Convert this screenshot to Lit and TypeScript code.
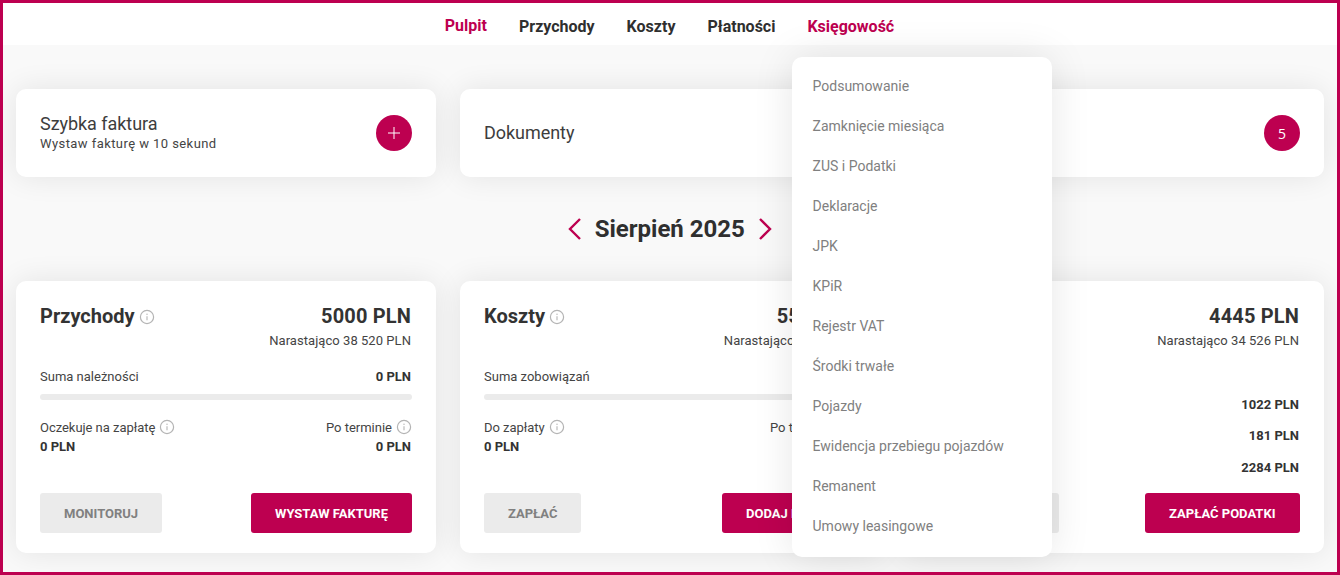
import { LitElement, html, css, svg } from "lit";
import { customElement } from "lit/decorators.js";

const info = html`<svg class="info" width="16" height="16" viewBox="0 0 16 16" fill="none"><circle cx="8" cy="8" r="6.6" stroke="#b4b4b4" stroke-width="1.2"/><path d="M8 7.2v4" stroke="#b4b4b4" stroke-width="1.1"/><circle cx="8" cy="5.2" r=".7" fill="#b4b4b4"/></svg>`;
const chevron = (d: string) => html`<svg width="16" height="24" viewBox="0 0 16 24" fill="none">${svg`<path d=${d} stroke="#bd0050" stroke-width="2.4"/>`}</svg>`;

const menu = ["Podsumowanie","Zamknięcie miesiąca","ZUS i Podatki","Deklaracje","JPK","KPiR","Rejestr VAT","Środki trwałe","Pojazdy","Ewidencja przebiegu pojazdów","Remanent","Umowy leasingowe"];

@customElement("app-root")
export class AppRoot extends LitElement {
  static styles = css`
    :host { display: block; box-sizing: border-box; height: 575px; border: 3px solid #bd0050; background: #f9f9f9; overflow: hidden; font-family: Roboto, sans-serif; color: #333; position: relative; }
    header { height: 42px; box-sizing: border-box; padding: 6px 1px 0 0; background: #fff; display: flex; justify-content: center; align-items: center; gap: 32px; font-size: 16px; font-weight: 700; color: #2f2f2f; position: relative; }
    .nav-item { position: relative; line-height: 20px; }
    .pink { color: #bd0050; }
    .up { margin-top: -2px; }
    .dropdown { position: absolute; left: -15.4px; top: 40px; width: 260px; box-sizing: border-box; padding: 9px 0 11px; background: #fff; border-radius: 10px; box-shadow: 0 0 40px rgba(0,0,0,.1); z-index: 5; }
    .dropdown div { height: 40px; line-height: 40px; padding-left: 20.5px; font-size: 14px; font-weight: 400; color: #808080; white-space: nowrap; }
    main { padding: 44px 13px 0; }
    .grid { display: grid; grid-template-columns: repeat(3, 1fr); gap: 24px; }
    .card { background: #fff; border-radius: 10px; box-shadow: 0 0 30px rgba(0,0,0,.09); }
    .top { height: 88px; box-sizing: border-box; padding: 0 24px; display: flex; align-items: center; justify-content: space-between; }
    .span2 { grid-column: span 2; }
    .qt { font-size: 18px; line-height: 22px; color: #3d3d3d; letter-spacing: -.05px; }
    .quick .qt { margin-top: -2px; }
    .qs { font-size: 13px; line-height: 16px; letter-spacing: .43px; color: #444; margin-top: 1px; }
    .circle { width: 36px; height: 36px; border-radius: 50%; background: #bd0050; color: #fff; display: flex; align-items: center; justify-content: center; font-family: "Open Sans", sans-serif; font-size: 14px; }
    .month { height: 104px; display: flex; align-items: center; justify-content: center; gap: 12px; font-size: 24px; font-weight: 700; color: #2f2f2f; }
    .month span { line-height: 28px; margin-left: -.5px; }
    .stat { height: 272px; box-sizing: border-box; padding: 22px 24px 20px; display: flex; flex-direction: column; }
    .head { display: flex; justify-content: space-between; align-items: center; height: 26px; }
    .title { display: flex; align-items: center; gap: 4px; font-size: 20px; font-weight: 700; color: #333; }
    .title .info { margin-top: 2px; }
    .amount { font-size: 20px; font-weight: 700; color: #333; letter-spacing: .15px; margin-right: 1px; }
    .sub { text-align: right; font-size: 13px; line-height: 16px; margin: 4px 1px 0 0; color: #444; letter-spacing: .05px; }
    .row { display: flex; justify-content: space-between; font-size: 13px; line-height: 16px; color: #444; }
    .sum { margin-top: 20px; }
    b { font-weight: 700; color: #333; }
    .row b { margin-right: 1px; }
    .bar { height: 6px; border-radius: 3px; background: #ebebeb; margin-top: 9px; }
    .split { display: flex; justify-content: space-between; margin-top: 18px; font-size: 13px; color: #444; }
    .split .r { text-align: right; }
    .split .r b { margin-right: 1px; }
    .label { display: flex; align-items: center; gap: 4px; height: 18px; }
    .left .label { letter-spacing: -.04px; }
    .split b { display: block; line-height: 16px; margin-top: 3px; }
    .tax { margin-top: 48px; display: flex; flex-direction: column; gap: 15.3px; }
    .tax .row { justify-content: flex-end; }
    .actions { margin-top: auto; display: flex; justify-content: space-between; }
    .btn { height: 40px; box-sizing: border-box; border-radius: 3px; font-size: 13px; font-weight: 700; text-transform: uppercase; display: flex; align-items: center; justify-content: center; padding: 0 24px; }
    .ghost { background: #ebebeb; color: #808080; }
    .primary { background: #bd0050; color: #fff; }
    .pay { padding: 0 24.5px; }
    .blank { width: 131px; padding: 0; }
  `;

  render() {
    return html`
      <header>
        <div class="nav-item pink up">Pulpit</div>
        <div class="nav-item">Przychody</div>
        <div class="nav-item">Koszty</div>
        <div class="nav-item">Płatności</div>
        <div class="nav-item pink">Księgowość
          <div class="dropdown">${menu.map((m) => html`<div>${m}</div>`)}</div>
        </div>
      </header>
      <main>
        <div class="grid">
          <div class="card top quick">
            <div><div class="qt">Szybka faktura</div><div class="qs">Wystaw fakturę w 10 sekund</div></div>
            <div class="circle"><svg width="14" height="14" viewBox="0 0 14 14"><path d="M7 1v12M1 7h12" stroke="#fff" stroke-width="1"/></svg></div>
          </div>
          <div class="card top span2">
            <div class="qt">Dokumenty</div>
            <div class="circle">5</div>
          </div>
        </div>
        <div class="month">
          ${chevron("M13 2 3 12l10 10")}
          <span>Sierpień 2025</span>
          ${chevron("M3 2l10 10L3 22")}
        </div>
        <div class="grid">
          <div class="card stat">
            <div class="head"><div class="title">Przychody ${info}</div><div class="amount">5000 PLN</div></div>
            <div class="sub">Narastająco 38 520 PLN</div>
            <div class="row sum"><span>Suma należności</span><b>0 PLN</b></div>
            <div class="bar"></div>
            <div class="split">
              <div class="left"><div class="label">Oczekuje na zapłatę ${info}</div><b>0 PLN</b></div>
              <div class="r"><div class="label">Po terminie ${info}</div><b>0 PLN</b></div>
            </div>
            <div class="actions"><div class="btn ghost">Monitoruj</div><div class="btn primary">Wystaw fakturę</div></div>
          </div>
          <div class="card stat">
            <div class="head"><div class="title">Koszty ${info}</div><div class="amount">555 PLN</div></div>
            <div class="sub">Narastająco 3994 PLN</div>
            <div class="row sum"><span>Suma zobowiązań</span></div>
            <div class="bar"></div>
            <div class="split">
              <div class="left"><div class="label">Do zapłaty ${info}</div><b>0 PLN</b></div>
              <div class="r"><div class="label">Po terminie ${info}</div></div>
            </div>
            <div class="actions"><div class="btn ghost">Zapłać</div><div class="btn primary">Dodaj koszt</div></div>
          </div>
          <div class="card stat">
            <div class="head"><div></div><div class="amount">4445 PLN</div></div>
            <div class="sub">Narastająco 34 526 PLN</div>
            <div class="tax">
              <div class="row"><b>1022 PLN</b></div>
              <div class="row"><b>181 PLN</b></div>
              <div class="row"><b>2284 PLN</b></div>
            </div>
            <div class="actions"><div class="btn ghost blank"></div><div class="btn primary pay">Zapłać podatki</div></div>
          </div>
        </div>
      </main>
    `;
  }
}
